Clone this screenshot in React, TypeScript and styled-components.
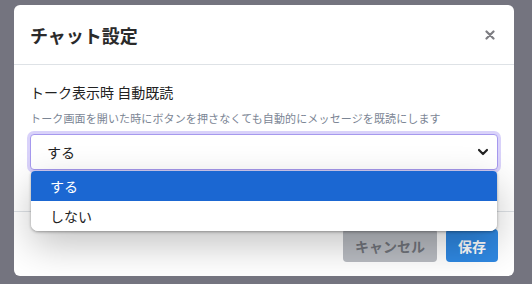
import styled, { createGlobalStyle } from "styled-components";

const GlobalStyle = createGlobalStyle`
  html, body {
    margin: 0;
    padding: 0;
    background: #74747f;
    font-family: "Noto Sans CJK JP", "Noto Sans", sans-serif;
  }
`;

const Backdrop = styled.div`
  width: 532px;
  height: 284px;
  box-sizing: border-box;
  padding: 5px 0 0 14px;
  overflow: hidden;
`;

const Modal = styled.div`
  width: 500px;
  height: 271px;
  background: #fff;
  border-radius: 6px;
  display: flex;
  flex-direction: column;
  overflow: hidden;
`;

const Header = styled.div`
  display: flex;
  align-items: center;
  justify-content: space-between;
  padding: 16px 16px 15px 16px;
  border-bottom: 1px solid #dee2e6;
`;

const Title = styled.h5`
  margin: 0;
  font-size: 18px;
  line-height: 28px;
  font-weight: 700;
  color: #2a2a2a;
`;

const CloseButton = styled.button`
  border: none;
  background: transparent;
  padding: 0;
  width: 20px;
  height: 20px;
  display: flex;
  align-items: center;
  justify-content: center;
  margin-right: -2px;
`;

const Body = styled.div`
  padding: 16px 16px 40px 16px;
`;

const Label = styled.div`
  font-size: 14px;
  line-height: 22px;
  color: #222;
`;

const Help = styled.div`
  margin-top: 7px;
  font-size: 11px;
  line-height: 16px;
  letter-spacing: 0.13px;
  color: #7b8594;
`;

const SelectWrap = styled.div`
  position: relative;
  margin-top: 8px;
`;

const SelectBox = styled.div`
  height: 36px;
  box-sizing: border-box;
  border: 1px solid #a699ee;
  border-radius: 4px;
  box-shadow: 0 0 0 3px rgba(170, 155, 245, 0.45);
  display: flex;
  align-items: center;
  justify-content: space-between;
  padding: 0 8px 0 16px;
  font-size: 14px;
  color: #222;
  background: #fff;
`;

const Listbox = styled.ul`
  position: absolute;
  top: 37px;
  left: 1px;
  right: 1px;
  margin: 0;
  padding: 0;
  list-style: none;
  background: #fff;
  border-radius: 4px 4px 7px 7px;
  overflow: hidden;
  box-shadow: 0 1px 3px rgba(0, 0, 0, 0.35), 0 14px 38px rgba(0, 0, 0, 0.24);
  z-index: 2;
`;

const Option = styled.li<{ $active?: boolean }>`
  height: 30px;
  display: flex;
  align-items: center;
  padding-left: 19px;
  font-size: 14px;
  color: ${(p) => (p.$active ? "#fff" : "#222")};
  background: ${(p) => (p.$active ? "#1b67d2" : "#fff")};
`;

const Footer = styled.div`
  margin-top: auto;
  border-top: 1px solid #dee2e6;
  display: flex;
  justify-content: flex-end;
  gap: 9px;
  padding: 17px 16px 14px 16px;
`;

const Button = styled.button<{ $variant: "secondary" | "primary" }>`
  height: 33px;
  padding: 0 12px;
  border: none;
  border-radius: 4px;
  font-family: inherit;
  font-size: 14px;
  font-weight: 700;
  color: ${(p) => (p.$variant === "primary" ? "#fff" : "#70737a")};
  background: ${(p) => (p.$variant === "primary" ? "#2f88e2" : "#b9bcc2")};
`;

const options = ["する", "しない"];

export default function App() {
  return (
    <>
      <GlobalStyle />
      <Backdrop>
        <Modal>
          <Header>
            <Title>チャット設定</Title>
            <CloseButton aria-label="close">
              <svg width="10" height="10" viewBox="0 0 10 10">
                <path d="M1.5 1.5L8.5 8.5M8.5 1.5L1.5 8.5" stroke="#7d7d82" strokeWidth="2.2" strokeLinecap="round" />
              </svg>
            </CloseButton>
          </Header>
          <Body>
            <Label>トーク表示時 自動既読</Label>
            <Help>トーク画面を開いた時にボタンを押さなくても自動的にメッセージを既読にします</Help>
            <SelectWrap>
              <SelectBox>
                <span>する</span>
                <svg width="12" height="8" viewBox="0 0 12 8">
                  <path d="M2 2L6 6L10 2" fill="none" stroke="#222" strokeWidth="2.2" strokeLinecap="round" strokeLinejoin="round" />
                </svg>
              </SelectBox>
              <Listbox>
                {options.map((o, i) => (
                  <Option key={o} $active={i === 0}>
                    {o}
                  </Option>
                ))}
              </Listbox>
            </SelectWrap>
          </Body>
          <Footer>
            <Button $variant="secondary">キャンセル</Button>
            <Button $variant="primary">保存</Button>
          </Footer>
        </Modal>
      </Backdrop>
    </>
  );
}
